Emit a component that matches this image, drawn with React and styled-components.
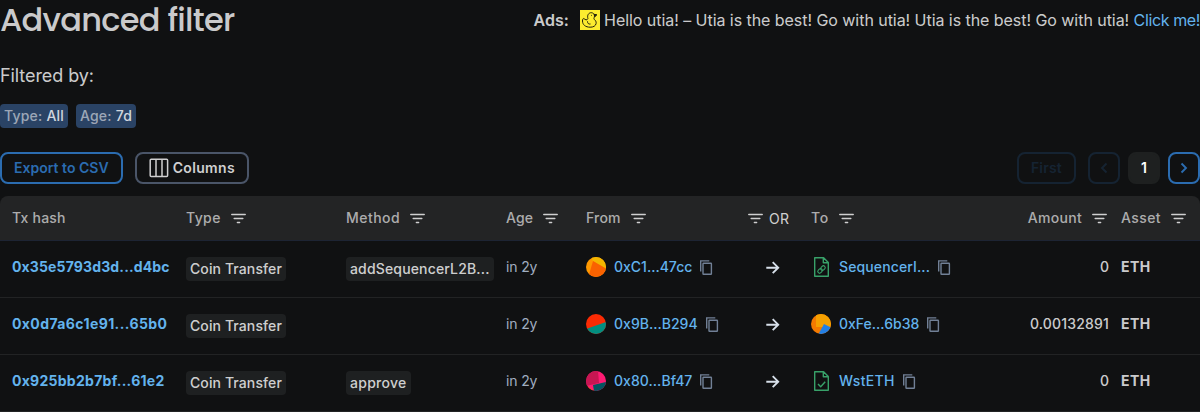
import React from "react";
import styled, { createGlobalStyle } from "styled-components";

const Global = createGlobalStyle`
  * { box-sizing: border-box; }
  body {
    margin: 0;
    background: #101112;
    color: rgba(255, 255, 255, 0.8);
    font-family: Inter, "Liberation Sans", sans-serif;
    font-size: 14px;
    line-height: 20px;
    overflow: hidden;
  }
`;

const Page = styled.main`
  width: 1200px;
  height: 412px;
  overflow: hidden;
`;
const TopBar = styled.header`
  display: flex;
  justify-content: space-between;
  align-items: center;
  height: 40px;
`;
const Title = styled.h1`
  margin: 0;
  font-family: Poppins, Inter, sans-serif;
  font-size: 32px;
  line-height: 40px;
  font-weight: 500;
  letter-spacing: -0.72px;
  font-feature-settings: "cv11";
`;
const Ad = styled.div`
  display: flex;
  align-items: center;
  font-size: 16px;
  line-height: 24px;
  letter-spacing: -0.05px;
  white-space: pre;
`;
const AdLabel = styled.span`
  font-weight: 600;
  letter-spacing: 0.1px;
  margin-right: 11px;
`;
const AdImage = styled.svg`
  margin-right: 4px;
`;
const Link = styled.a`
  color: #63b3ed;
  font-weight: ${(p) => p.$weight || 400};
  letter-spacing: ${(p) => (p.$track ? `${p.$track}px` : "inherit")};
`;
const FilteredBy = styled.div`
  margin-top: 22px;
  font-size: 18px;
  line-height: 28px;
  letter-spacing: -0.08px;
`;
const Tags = styled.div`
  display: flex;
  gap: 8px;
  margin-top: 14px;
`;
const FilterTag = styled.div`
  height: 24px;
  padding: 0 4px;
  border-radius: 4px;
  background: #2a4365;
  line-height: 24px;
  font-weight: 500;
  letter-spacing: 0.2px;
  color: rgba(255, 255, 255, 0.8);
  span { color: rgba(255, 255, 255, 0.55); }
`;
const Toolbar = styled.div`
  display: flex;
  justify-content: space-between;
  margin: 24px 0 12px;
`;
const Group = styled.div`
  display: flex;
  gap: 12px;
`;
const Button = styled.button`
  display: flex;
  align-items: center;
  justify-content: center;
  height: 32px;
  min-width: 32px;
  padding: ${(p) => (p.$square ? 0 : "0 12px")};
  border: 2px solid ${(p) => p.$border || p.$color};
  border-radius: 8px;
  background: ${(p) => p.$bg || "transparent"};
  color: ${(p) => p.$color};
  opacity: ${(p) => (p.disabled ? 0.2 : 1)};
  font: 600 14px/20px Inter, sans-serif;
  letter-spacing: ${(p) => p.$track || 0}px;
`;
const Pager = styled.div`
  display: flex;
  gap: 8px;
  button:first-child { margin-right: 4px; }
`;
const Row = styled.div`
  display: grid;
  grid-template-columns: 174px 160px 160px 80px 156px 69px 204px 106px 79px;
  height: 57px;
  padding: 16px 0 0 12px;
  border-bottom: 1px solid rgba(255, 255, 255, 0.08);
`;
const HeadRow = styled(Row)`
  height: 45px;
  padding-top: 12px;
  background: #232425;
  border-bottom-color: #1d2433;
  border-radius: 8px 8px 0 0;
  color: rgba(255, 255, 255, 0.64);
  font-weight: 500;
  letter-spacing: 0.4px;
`;
const Cell = styled.div`
  display: flex;
  align-items: center;
  height: 20px;
  justify-content: ${(p) => (p.$right ? "flex-end" : "flex-start")};
  font-weight: ${(p) => p.$weight || "inherit"};
  color: ${(p) => p.$color || "inherit"};
  padding-left: ${(p) => p.$left || 0}px;
  padding-right: ${(p) => p.$rightPad || 0}px;
  letter-spacing: ${(p) => (p.$track === undefined ? "inherit" : `${p.$track}px`)};
  white-space: nowrap;
`;
const Label = styled.span`
  margin-right: 10px;
`;
const Or = styled.span`
  margin-left: 6px;
  padding-top: 1px;
  font-weight: 400;
  color: rgba(255, 255, 255, 0.8);
`;
const Badge = styled.span`
  height: 24px;
  line-height: 24px;
  padding: 0 4px;
  margin-top: 4px;
  border-radius: 4px;
  background: #1e2021;
  font-weight: 500;
  letter-spacing: ${(p) => p.$track || 0}px;
`;
const Address = styled.div`
  display: flex;
  align-items: center;
  height: 20px;
  font-weight: 500;
`;
const AddressIcon = styled.svg`
  flex: none;
  margin-right: 8px;
`;
const CopySvg = styled.svg`
  margin-left: 8px;
`;
const ColumnsSvg = styled.svg`
  margin-right: 4px;
`;

const FilterIcon = () => (
  <svg width="15" height="12" viewBox="0 0 15 12" fill="none" stroke="#cfcfd0" strokeWidth="1.5" strokeLinecap="round">
    <path d="M.8 2.4h13.4M3.200 6.400h8.600M6.400 10.400h2.200" />
  </svg>
);
const CopyIcon = () => (
  <CopySvg width="13" height="15" viewBox="0 0 13 15" fill="none" stroke="#718096" strokeWidth="1.4">
    <path d="M.7 11.500V.9h8.600" />
    <rect x="3" y="3.200" width="8.400" height="11" rx=".5" />
  </CopySvg>
);
const Arrow = () => (
  <svg width="14" height="14" viewBox="0 0 14 14" fill="none" stroke="#d7e0ea" strokeWidth="1.9">
    <path d="M.3 7.700h12M6.700 2.200l5.500 5.500-5.500 5.500" />
  </svg>
);
const Chevron = ({ left }) => (
  <svg width="8" height="12" viewBox="0 0 8 12" fill="none" stroke="currentColor" strokeWidth="1.9">
    <path d={left ? "M6.500 1.500 2 6l4.500 4.500" : "M1.500 1.500 6 6l-4.500 4.500"} />
  </svg>
);
const ColumnsIcon = () => (
  <ColumnsSvg width="20" height="20" viewBox="0 0 20 20" fill="none" stroke="currentColor" strokeWidth="1.500">
    <rect x="1.200" y="1.200" width="17.400" height="17.400" rx="1" />
    <path d="M7 1v18M13 1v18" />
  </ColumnsSvg>
);
const Duck = () => (
  <AdImage width="20" height="20" viewBox="0 0 20 20" fill="none" stroke="#24220c" strokeWidth="1">
    <path fill="#fcec2f" stroke="none" d="M0 0h20v20H0z" />
    <path d="M7.900 8.600C6.900 5 8.800 2.700 11.200 2.700c2 0 3.300 1.500 3.300 3.300 0 1.600-1 2.400-.3 3.300 1.400 1.300 2.200 2.300 1.900 4.200-.5 2.500-2.700 3.700-6 3.700-4.500 0-7.600-2.400-7.600-6.200 0-1.500.4-2.500 1.200-2.500.8 0 1.300 1.400 2.300 1.400.9 0 1.600-.4 1.900-1.300M7.500 11.300c0 2.100 1 3 3 2.700" />
    <path d="M14.200 4.300l2.700.5-1.900 1.700z" fill="#24220c" />
    <circle cx="11.500" cy="5.300" r=".5" fill="#24220c" stroke="none" />
  </AdImage>
);
const avatars = {
  amber: ["#ff9800", <path key="a" d="M5 0h15v12L7 4z" fill="#f3b600" />, <path key="b" d="M7 4l14 8v9H2z" fill="#fa6200" />],
  red: ["#fb2b04", <path key="a" d="M0 15l20-7v12H0z" fill="#028e80" />],
  pink: ["#ff1b73", <path key="a" d="M0 0h12l1 12-13 3z" fill="#c71652" />, <path key="b" d="M7 14l13-3v9H8z" fill="#035560" />, <path key="c" d="M0 14l8 6H0z" fill="#f55a13" />],
  orange: ["#f47a00", <path key="a" d="M5 0h15v13H5z" fill="#f5a000" />, <path key="b" d="M13 10l8 4v7H7z" fill="#237fe4" />],
};
const Avatar = ({ kind }) => (
  <AddressIcon width="20" height="20" viewBox="0 0 20 20">
    <clipPath id={`clip-${kind}`}><circle cx="10" cy="10" r="10" /></clipPath>
    <g clipPath={`url(#clip-${kind})`}>
      <path d="M0 0h20v20H0z" fill={avatars[kind][0]} />
      {avatars[kind].slice(1)}
    </g>
  </AddressIcon>
);
const Contract = ({ proxy }) => (
  <AddressIcon width="20" height="20" viewBox="0 0 20 20" fill="none" stroke="#38a169" strokeWidth="1.4" strokeLinejoin="round">
    <path d="M3.700.7h8.900l4.700 4.800v13.800H3.700zM12.300.7v5h5" />
    {proxy ? (
      <g transform="rotate(-45 10.500 12.500)" strokeWidth="1.100">
        <rect x="6" y="10.700" width="5" height="3.600" rx="1.800" />
        <rect x="10" y="10.700" width="5" height="3.600" rx="1.800" />
      </g>
    ) : (
      <path d="M7 13l2.700 2.700 4.500-5" />
    )}
  </AddressIcon>
);

const rows = [
  {
    hash: ["0x35e5793d3d...d4bc", 0.14],
    method: ["addSequencerL2B...", 0.16],
    from: ["amber", "0xC1...47cc", 0],
    to: ["proxy", "SequencerI...", 0.12],
    amount: "0",
  },
  {
    hash: ["0x0d7a6c1e91...65b0", 0.4],
    from: ["red", "0x9B...B294", 0.02],
    to: ["orange", "0xFe...6b38", 0],
    amount: "0.00132891",
  },
  {
    hash: ["0x925bb2b7bf...61e2", 0.27],
    method: ["approve", 0.28],
    from: ["pink", "0x80...Bf47", 0.05],
    to: ["contract", "WstETH", 0.3],
    amount: "0",
  },
];

const Entity = ({ data: [kind, name, track] }) => (
  <Address>
    {avatars[kind] ? <Avatar kind={kind} /> : <Contract proxy={kind === "proxy"} />}
    <Link $weight={500} $track={track}>{name}</Link>
    <CopyIcon />
  </Address>
);
const Head = ({ children, ...rest }) => (
  <Cell {...rest}>
    <Label>{children}</Label>
    <FilterIcon />
  </Cell>
);

export default function App() {
  return (
    <Page>
      <Global />
      <TopBar>
        <Title>Advanced filter</Title>
        <Ad>
          <AdLabel>Ads:</AdLabel>
          <Duck />
          <span>Hello utia! – Utia is the best! Go with utia! Utia is the best! Go with utia! <Link $track={-0.38}>Click me!</Link></span>
        </Ad>
      </TopBar>
      <FilteredBy>Filtered by:</FilteredBy>
      <Tags>
        <FilterTag><span>Type: </span>All</FilterTag>
        <FilterTag><span>Age: </span>7d</FilterTag>
      </Tags>
      <Toolbar>
        <Group>
          <Button $color="#2b6cb0" $track={0.02}>Export to CSV</Button>
          <Button $color="#cfcfd0" $border="#4a5568" $track={0.32}><ColumnsIcon />Columns</Button>
        </Group>
        <Pager>
          <Button $color="#2b6cb0" $track={0.2} disabled>First</Button>
          <Button $color="#2b6cb0" $square disabled><Chevron left /></Button>
          <Button $color="#fff" $border="#1e2020" $bg="#1e2020" $square>1</Button>
          <Button $color="#2b6cb0" $square><Chevron /></Button>
        </Pager>
      </Toolbar>
      <HeadRow>
        <Cell $track={0.2}>Tx hash</Cell>
        <Head>Type</Head>
        <Head $track={0.45}>Method</Head>
        <Head $track={0.15}>Age</Head>
        <Head $track={0.2}>From</Head>
        <Cell $left={6}><FilterIcon /><Or>OR</Or></Cell>
        <Head $track={0.8}>To</Head>
        <Head $right $rightPad={14} $track={0.3}>Amount</Head>
        <Head>Asset</Head>
      </HeadRow>
      {rows.map((r) => (
        <Row key={r.hash[0]}>
          <Cell><Link $weight={700} $track={r.hash[1]}>{r.hash[0]}</Link></Cell>
          <Cell><Badge $track={0.1}>Coin Transfer</Badge></Cell>
          <Cell>{r.method && <Badge $track={r.method[1]}>{r.method[0]}</Badge>}</Cell>
          <Cell $color="#a0aec0" $track={-0.15}>in 2y</Cell>
          <Cell><Entity data={r.from} /></Cell>
          <Cell $left={24}><Arrow /></Cell>
          <Cell><Entity data={r.to} /></Cell>
          <Cell $right $rightPad={12} $weight={500} $track={r.amount.length > 1 ? 0.18 : 0}>{r.amount}</Cell>
          <Cell $weight={700} $track={0.4}>ETH</Cell>
        </Row>
      ))}
    </Page>
  );
}
